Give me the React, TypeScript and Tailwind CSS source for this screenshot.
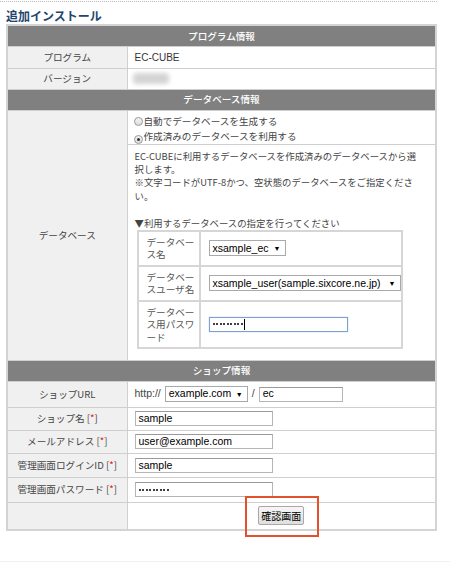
const cjk = "font-['Noto_Sans_CJK_JP',sans-serif]";
const latin = "font-['Liberation_Sans','Noto_Sans_CJK_JP',sans-serif]";

function Header({ title }: { title: string }) {
  return (
    <tr className="h-[21px]">
      <td colSpan={2} className="bg-[#808080] text-white text-center border border-[#cfcfcf] p-0 font-medium">
        {title}
      </td>
    </tr>
  );
}

function Label({ children, rowSpan }: { children: React.ReactNode; rowSpan?: number }) {
  return (
    <td rowSpan={rowSpan} className="bg-[#f0f0f0] text-center text-[#444] border border-[#cfcfcf] p-0 whitespace-nowrap">
      {children}
    </td>
  );
}

function Req({ text }: { text: string }) {
  return (
    <>
      {text} [<span className="text-[#e0202a]">*</span>]
    </>
  );
}

function Radio({ checked }: { checked?: boolean }) {
  return (
    <span className="inline-flex items-center justify-center w-[9px] h-[9px] rounded-full border border-[#9a9a9a] bg-gradient-to-b from-[#f4f4f4] to-[#dcdcdc] mr-px align-[-1px]">
      {checked && <span className="w-[3px] h-[3px] rounded-full bg-[#333]" />}
    </span>
  );
}

function Select({ value, w }: { value: string; w: string }) {
  return (
    <span className={`inline-flex items-center justify-between h-[16px] border border-[#a9a9a9] bg-white pl-[3px] pr-[4px] text-[10.5px] text-black align-middle ${latin} ${w}`}>
      <span>{value}</span>
      <span className="text-[7px] leading-none">▼</span>
    </span>
  );
}

function Input({ value, w = "w-[138px]", focus, dots }: { value?: string; w?: string; focus?: boolean; dots?: boolean }) {
  return (
    <span
      className={`inline-flex items-center h-[15px] bg-white pl-[3px] text-[10.5px] text-black align-middle ${latin} ${w} ${
        focus ? "border border-[#7d9fd3] shadow-[0_0_1px_#9fbce8]" : "border border-[#b5b5b5] border-t-[#9a9a9a]"
      }`}
    >
      {dots ? (
        <span className="flex gap-[1.5px]">
          {Array.from({ length: 9 }).map((_, i) => (
            <span key={i} className="w-[2px] h-[2px] rounded-full bg-black" />
          ))}
        </span>
      ) : (
        value
      )}
      {focus && <span className="w-px h-[11px] bg-black ml-px" />}
    </span>
  );
}

function NestedRow({ label, h, children }: { label: React.ReactNode; h: string; children: React.ReactNode }) {
  return (
    <tr className={h}>
      <td className="border-2 border-[#d6d6d6] pl-[8px] pr-[2px] text-[#555] leading-[12.5px] align-middle">{label}</td>
      <td className="border-2 border-[#d6d6d6] pl-[8px] align-middle leading-none">{children}</td>
    </tr>
  );
}

export default function App() {
  return (
    <div className={`relative w-[450px] h-[564px] bg-white text-[9.6px] text-[#333] overflow-hidden ${cjk}`}>
      <div className="w-[437px] border-t border-dotted border-[#bdbdbd] mt-px" />
      <h1 className="ml-[6px] mt-[6px] text-[12px] leading-[16px] font-bold text-[#23466f]">追加インストール</h1>

      <table className="ml-[6px] w-[431px] border-collapse border-2 border-[#d4d4d4] table-fixed">
        <colgroup>
          <col className="w-[120px]" />
          <col />
        </colgroup>
        <tbody>
          <Header title="プログラム情報" />
          <tr className="h-[22px]">
            <Label>プログラム</Label>
            <td className={`border border-[#cfcfcf] pl-[7px] text-[10px] ${latin}`}>EC-CUBE</td>
          </tr>
          <tr className="h-[21px]">
            <Label>バージョン</Label>
            <td className="border border-[#cfcfcf] pl-[5px]">
              <div className="w-[36px] h-[11px] bg-[#d4d4d4] blur-[2px] rounded-sm" />
            </td>
          </tr>

          <Header title="データベース情報" />
          <tr className="h-[33px]">
            <Label rowSpan={2}>データベース</Label>
            <td className="border border-[#cfcfcf] pl-[6px] pt-[3px] leading-[15px] text-[#444]">
              <div>
                <Radio />
                自動でデータベースを生成する
              </div>
              <div>
                <Radio checked />
                作成済みのデータベースを利用する
              </div>
            </td>
          </tr>
          <tr className="h-[216px]">
            <td className="border border-[#cfcfcf] pl-[7px] pt-[5px] pb-[10px] align-top leading-[13.4px] text-[9.4px] text-[#444] whitespace-nowrap">
              EC-CUBEに利用するデータベースを作成済みのデータベースから選
              <br />
              択します。
              <br />
              ※文字コードがUTF-8かつ、空状態のデータベースをご指定くださ
              <br />
              い。
              <br />
              <br />
              ▼利用するデータベースの指定を行ってください
              <table className="ml-[2px] w-[266px] border-collapse border-2 border-[#d6d6d6] table-fixed text-[9.6px]">
                <colgroup>
                  <col className="w-[62px]" />
                  <col />
                </colgroup>
                <tbody>
                  <NestedRow
                    h="h-[35px]"
                    label={
                      <>
                        データベー
                        <br />
                        ス名
                      </>
                    }
                  >
                    <Select value="xsample_ec" w="w-[77px]" />
                  </NestedRow>
                  <NestedRow
                    h="h-[35px]"
                    label={
                      <>
                        データベー
                        <br />
                        スユーザ名
                      </>
                    }
                  >
                    <Select value="xsample_user(sample.sixcore.ne.jp)" w="w-[192px]" />
                  </NestedRow>
                  <NestedRow
                    h="h-[47px]"
                    label={
                      <>
                        データベー
                        <br />
                        ス用パスワ
                        <br />
                        ード
                      </>
                    }
                  >
                    <Input dots focus w="w-[139px]" />
                  </NestedRow>
                </tbody>
              </table>
            </td>
          </tr>

          <Header title="ショップ情報" />
          <tr className="h-[26px]">
            <Label>ショップURL</Label>
            <td className="border border-[#cfcfcf] pl-[7px] text-[#444]">
              <div className="flex items-center">
                <span className={`text-[10.5px] ${latin} mr-[4px]`}>http://</span>
                <Select value="example.com" w="w-[83px]" />
                <span className={`text-[10.5px] ${latin} mx-[4px]`}>/</span>
                <Input value="ec" w="w-[84px]" />
              </div>
            </td>
          </tr>
          <tr className="h-[23px]">
            <Label>
              <Req text="ショップ名" />
            </Label>
            <td className="border border-[#cfcfcf] pl-[7px]">
              <Input value="sample" />
            </td>
          </tr>
          <tr className="h-[23px]">
            <Label>
              <Req text="メールアドレス" />
            </Label>
            <td className="border border-[#cfcfcf] pl-[7px]">
              <Input value="user@example.com" />
            </td>
          </tr>
          <tr className="h-[24px]">
            <Label>
              <Req text="管理画面ログインID" />
            </Label>
            <td className="border border-[#cfcfcf] pl-[7px]">
              <Input value="sample" />
            </td>
          </tr>
          <tr className="h-[25px]">
            <Label>
              <Req text="管理画面パスワード" />
            </Label>
            <td className="border border-[#cfcfcf] pl-[7px]">
              <Input dots />
            </td>
          </tr>
          <tr className="h-[28px]">
            <Label>{""}</Label>
            <td className="border border-[#cfcfcf] text-center">
              <button className="h-[19px] px-[2px] border border-[#a8a8a8] rounded-[2px] bg-gradient-to-b from-[#f6f6f6] to-[#dedede] text-[10px] text-black leading-none align-middle">
                確認画面
              </button>
            </td>
          </tr>
        </tbody>
      </table>

      <div className="absolute left-[245px] top-[496px] w-[74px] h-[41px] border-2 border-[#e2532c]" />
      <div className="absolute left-0 bottom-[2px] w-[450px] border-t border-[#f0f0f0]" />
    </div>
  );
}
